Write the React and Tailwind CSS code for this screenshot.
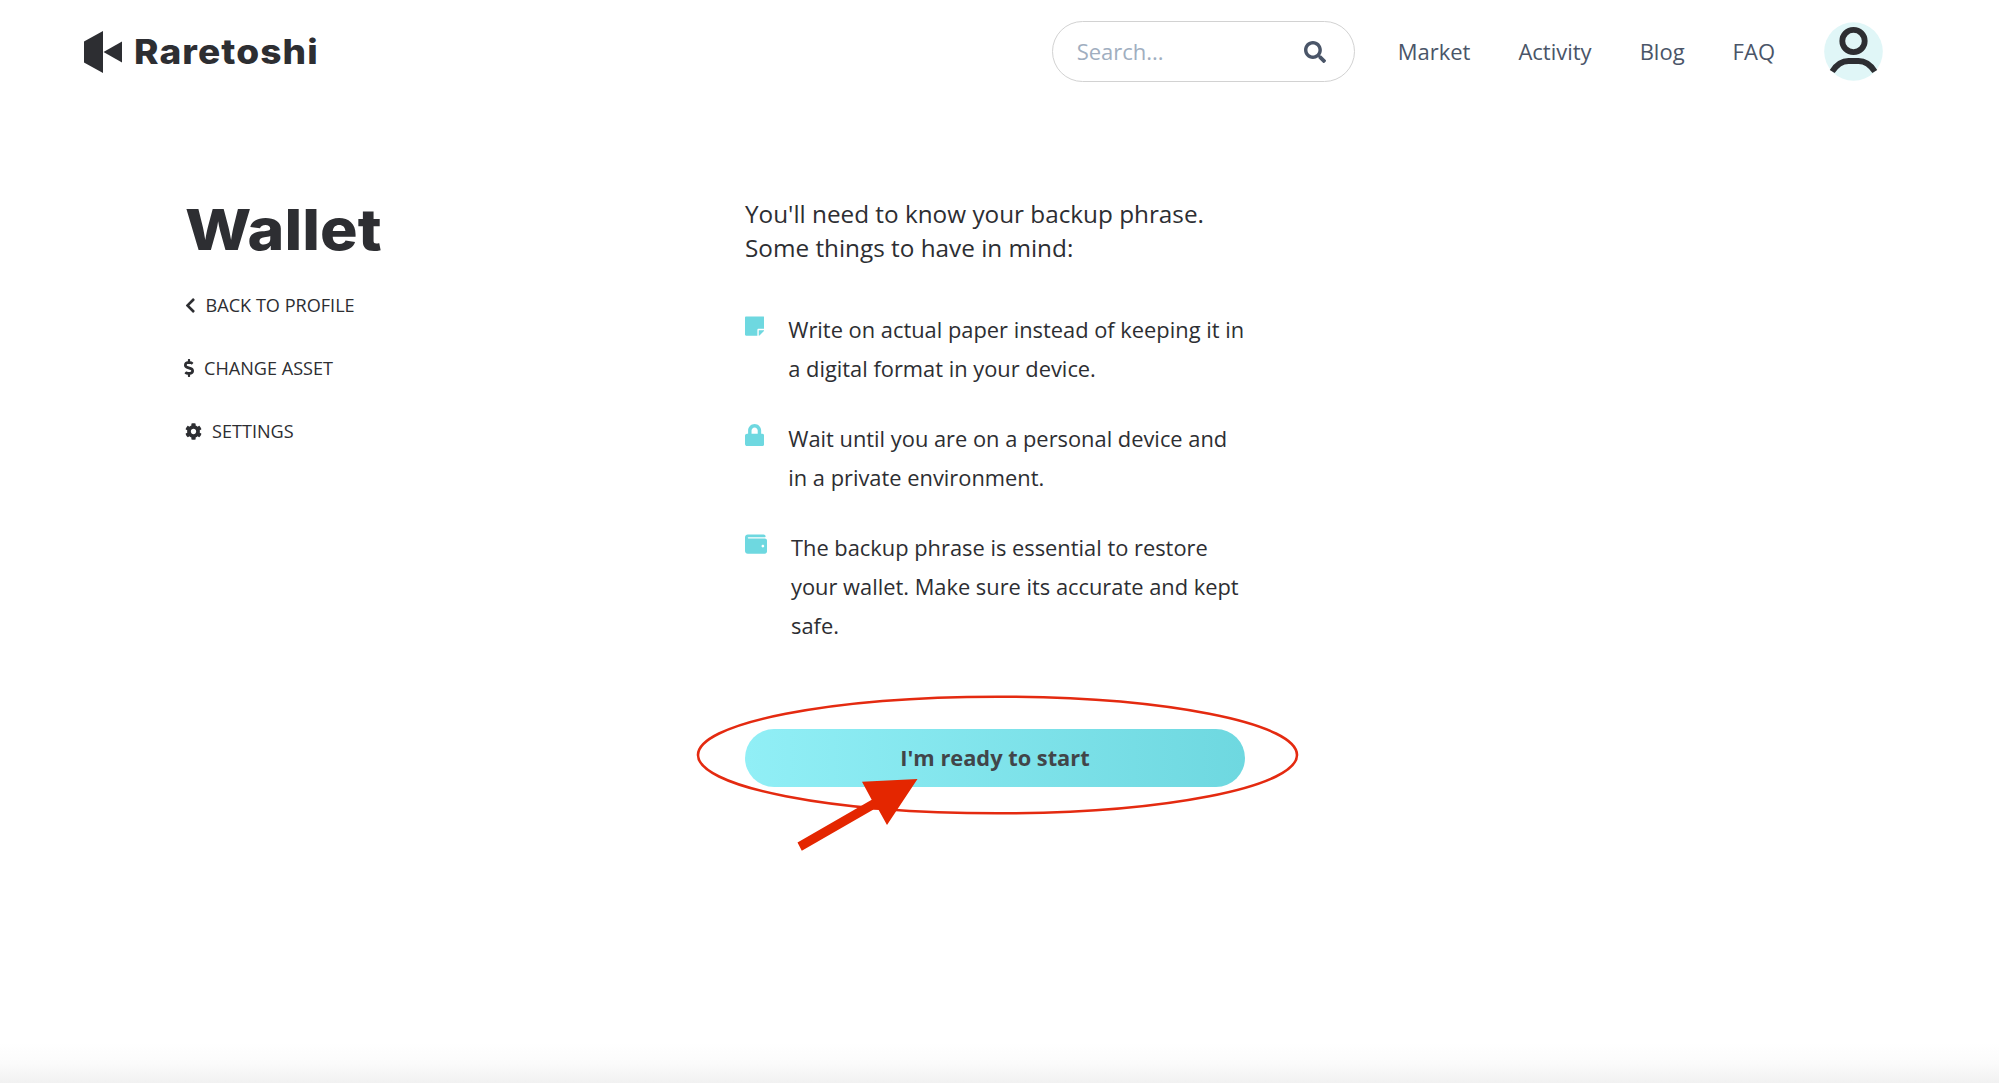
import React from "react";
import { FaChevronLeft, FaCog, FaDollarSign, FaLock, FaSearch, FaStickyNote, FaWallet } from "react-icons/fa";

function Logo() {
  return (
    <a className="flex items-center">
      <svg className="h-[42px] w-[38px]" viewBox="0 0 38 42" fill="#2d2e32">
        <path d="M0 10.5 19 0V42L0 31.5Z" />
        <path d="M19.5 21 38 10.5V31.5Z" />
      </svg>
      <span className="ml-[12px] origin-left scale-x-[1.09] font-['Inter'] text-[34px] leading-[42px] font-extrabold tracking-[1px] whitespace-nowrap">
        Raretoshi
      </span>
    </a>
  );
}

function Avatar() {
  return (
    <svg className="ml-[49px] h-[59px] w-[59px] shrink-0" viewBox="0 0 59 59" fill="none">
      <circle cx="29.5" cy="29.5" r="29.3" fill="#e0f6f7" />
      <circle cx="29.5" cy="19" r="11.2" stroke="#2d2e32" strokeWidth="5.8" />
      <path d="M8.2 49.5Q15 39 24.5 39H34.5Q44 39 50.8 49.5" stroke="#2d2e32" strokeWidth="5.8" />
    </svg>
  );
}

function Header() {
  return (
    <header className="flex h-[103px] items-center pr-[116px] pl-[84px] text-[22px] text-[#4a5568]">
      <div className="flex-1 text-[#2d2e32]">
        <Logo />
      </div>
      <div className="flex h-[61px] w-[303px] items-center justify-between rounded-full border border-[#d2d2d2] pr-[28px] pl-[24px]">
        <span className="text-[#a0aec0]">Search...</span>
        <FaSearch className="size-[22px]" />
      </div>
      <nav className="ml-[43px] flex gap-[48px] whitespace-nowrap">
        <a>Market</a>
        <a>Activity</a>
        <a>Blog</a>
        <a>FAQ</a>
      </nav>
      <Avatar />
    </header>
  );
}

function Sidebar() {
  return (
    <aside className="w-[560px] shrink-0 pt-[94px]">
      <h1 className="origin-left scale-x-[1.1] font-['Inter'] text-[57px] leading-[66px] font-extrabold whitespace-nowrap">
        Wallet
      </h1>
      <ul className="mt-[30px] text-[18.1px] leading-[25px]">
        <li className="flex h-[63px] items-start">
          <FaChevronLeft className="mt-[4px] mr-[10px] h-[17px] w-[10.6px]" />
          BACK TO PROFILE
        </li>
        <li className="-ml-px flex h-[63px] items-start">
          <FaDollarSign className="mt-[3px] mr-[10px] h-[18px] w-[10px]" />
          CHANGE ASSET
        </li>
        <li className="flex h-[63px] items-start">
          <FaCog className="mt-[4px] mr-[10px] size-[17px]" />
          SETTINGS
        </li>
      </ul>
    </aside>
  );
}

function Tip({ icon, lines }) {
  return (
    <li className="flex items-start gap-[24px]">
      {icon}
      <p className="whitespace-nowrap">
        {lines.map((line) => (
          <span key={line} className="block">{line}</span>
        ))}
      </p>
    </li>
  );
}

function Annotation() {
  return (
    <svg
      className="pointer-events-none absolute -top-[39px] -left-[55px] h-[170px] w-[620px]"
      viewBox="690 690 620 170"
      fill="none"
    >
      <ellipse cx="997.5" cy="755" rx="299.5" ry="58.3" stroke="#e42a10" strokeWidth="2.6" />
      <path
        d="M917.5 779 862 781.8 871.7 799.7 797.5 842.5 801.8 850.7 873.5 809.5H878.4L887 825Z"
        fill="#e42600"
      />
    </svg>
  );
}

export default function App() {
  return (
    <div className="flex h-[1083px] flex-col overflow-hidden bg-white font-['Open_Sans',sans-serif] text-[#2d2e32]">
      <Header />
      <div className="flex flex-1 pl-[185px]">
        <Sidebar />
        <main className="w-[500px] pt-[94px]">
          <p className="text-[24.3px] leading-[34px] whitespace-nowrap">
            You'll need to know your backup phrase.
            <br />
            Some things to have in mind:
          </p>
          <ul className="mt-[45px] flex flex-col gap-[31px] text-[21.85px] leading-[39px]">
            <Tip
              icon={<FaStickyNote className="mt-[5px] h-[22px] w-[19.25px] shrink-0 text-[#6ed8e0]" />}
              lines={["Write on actual paper instead of keeping it in", "a digital format in your device."]}
            />
            <Tip
              icon={<FaLock className="mt-[5px] h-[22px] w-[19.25px] shrink-0 text-[#6ed8e0]" />}
              lines={["Wait until you are on a personal device and", "in a private environment."]}
            />
            <Tip
              icon={<FaWallet className="mt-[5px] size-[22px] shrink-0 text-[#6ed8e0]" />}
              lines={["The backup phrase is essential to restore", "your wallet. Make sure its accurate and kept", "safe."]}
            />
          </ul>
          <div className="relative mt-[84px]">
            <button className="h-[58px] w-full rounded-full bg-linear-to-r from-[#91eff6] to-[#6ed8e0] text-[21.8px] font-bold text-[#414549]">
              I'm ready to start
            </button>
            <Annotation />
          </div>
        </main>
      </div>
      <div className="h-[40px] shrink-0 bg-linear-to-b from-white via-[#fbfbfb] to-[#f1f1f1]" />
    </div>
  );
}
